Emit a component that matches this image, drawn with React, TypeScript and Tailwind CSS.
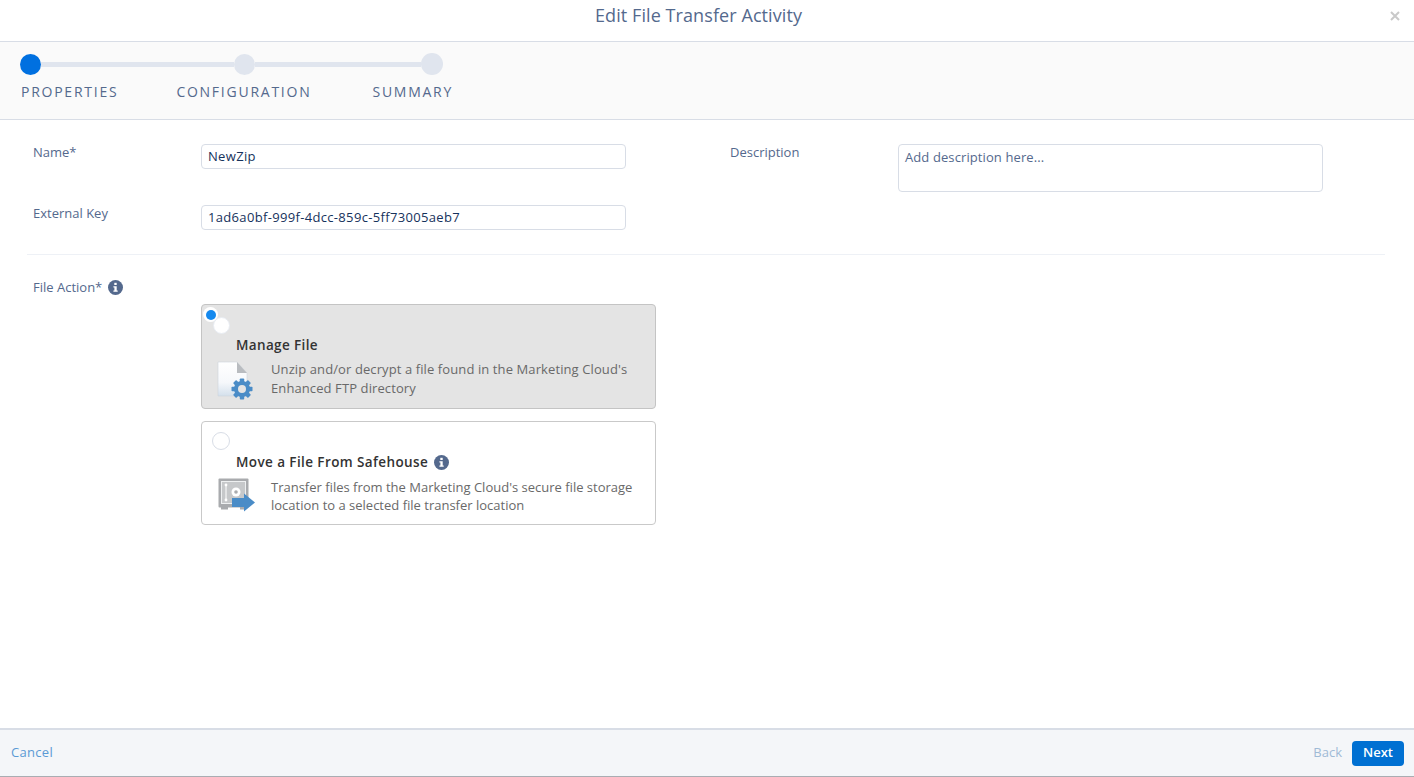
const font = "font-['Open_Sans','Noto_Sans',sans-serif]";

function InfoIcon() {
  return (
    <svg width="15" height="15" viewBox="0 0 15 15" className="shrink-0">
      <circle cx="7.5" cy="7.5" r="7.5" fill="#54698d" />
      <rect x="6.3" y="2.8" width="2.4" height="2.2" fill="#fff" />
      <path d="M5.4 6.2h3.3v4.2h1v1.3H5.4v-1.3h1V7.5h-1z" fill="#fff" />
    </svg>
  );
}

function FileGearIcon() {
  return (
    <svg width="38" height="40" viewBox="0 0 38 40">
      <defs>
        <linearGradient id="page" x1="0" y1="0" x2="0" y2="1">
          <stop offset="0" stopColor="#ffffff" />
          <stop offset="0.6" stopColor="#f6f8fb" />
          <stop offset="1" stopColor="#d4e0ec" />
        </linearGradient>
      </defs>
      <path d="M1 1h19l10 11v23H1z" fill="url(#page)" stroke="#cfd5dc" strokeWidth="0.6" />
      <path d="M20 1l10 11H20z" fill="#b9bcc0" />
      <g fill="#4a8cc7">
        <circle cx="25" cy="28" r="8" />
        <rect x="22.8" y="17.5" width="4.4" height="21" rx="0.8" />
        <rect x="14.5" y="25.8" width="21" height="4.4" rx="0.8" />
        <rect x="22.8" y="17.5" width="4.4" height="21" rx="0.8" transform="rotate(45 25 28)" />
        <rect x="22.8" y="17.5" width="4.4" height="21" rx="0.8" transform="rotate(-45 25 28)" />
      </g>
      <circle cx="25" cy="28" r="4" fill="#e4e4e4" />
    </svg>
  );
}

function SafeIcon() {
  return (
    <svg width="38" height="36" viewBox="0 0 38 36">
      <rect x="0.5" y="0.5" width="30" height="29" rx="1" fill="#a9abae" />
      <rect x="3" y="29" width="7" height="2.5" fill="#a9abae" />
      <rect x="22" y="29" width="6" height="2.5" fill="#a9abae" />
      <rect x="3.5" y="3.5" width="24" height="22" fill="#c6c8ca" stroke="#eef0f1" strokeWidth="1" />
      <path d="M8 7v15" stroke="#fff" strokeWidth="1" />
      <circle cx="8" cy="7" r="1.4" fill="#fff" />
      <circle cx="8" cy="22" r="1.4" fill="#fff" />
      <circle cx="18" cy="14" r="4.5" fill="#fff" />
      <circle cx="18" cy="14" r="1.8" fill="#a9abae" />
      <path d="M14 20h12v-4.5l11 9-11 9V29H14z" fill="#4a8cc7" />
    </svg>
  );
}

function Field({ label, value }: { label: string; value: string }) {
  return (
    <div className="flex items-start">
      <label className="w-[168px] text-[13px] leading-[16px] text-[#54698d]">{label}</label>
      <div className="flex h-[25px] w-[425px] items-center rounded-[4px] border border-[#d8dde6] px-[6px] text-[13px] tracking-[0.33px] text-[#16325c]">
        {value}
      </div>
    </div>
  );
}

export default function App() {
  return (
    <div className={`flex h-[777px] w-[1414px] flex-col overflow-hidden bg-white ${font}`}>
      <header className="flex h-[42px] shrink-0 items-center border-b border-[#d8dde6] pr-[14px] pb-[10px] pl-[7px]">
        <h1 className="flex-1 text-center text-[18px] tracking-[0.08px] text-[#54698d]">Edit File Transfer Activity</h1>
        <svg width="10" height="10" viewBox="0 0 10 10">
          <path d="M1 1l8 8M9 1l-8 8" stroke="#c9c9c9" strokeWidth="2" />
        </svg>
      </header>

      <div className="h-[78px] shrink-0 border-b border-[#d8dde6] bg-[#fafafa] pt-[11px] pl-[20px]">
        <div className="flex w-[423px] items-center">
          <span className="h-[21px] w-[21px] shrink-0 rounded-full bg-[#0070e0]" />
          <span className="h-[5px] w-[193px] bg-[#e0e5ee]" />
          <span className="h-[21px] w-[21px] shrink-0 rounded-full bg-[#e0e5ee]" />
          <span className="h-[5px] w-[166px] bg-[#e0e5ee]" />
          <span className="h-[22px] w-[22px] shrink-0 rounded-full bg-[#e0e5ee]" />
        </div>
        <div className="mt-[8px] flex pl-[1px] text-[14px] leading-[18px] tracking-[1.75px] text-[#54698d]">
          <span className="mr-[58px]">PROPERTIES</span>
          <span className="mr-[61px]">CONFIGURATION</span>
          <span>SUMMARY</span>
        </div>
      </div>

      <main className="flex-1 pt-[24px]">
        <div className="mr-[29px] ml-[27px] border-b border-[#eef1f6] pb-[24px]">
          <div className="flex pl-[6px]">
            <div className="flex w-[697px] flex-col gap-[36px]">
              <Field label="Name*" value="NewZip" />
              <Field label="External Key" value="1ad6a0bf-999f-4dcc-859c-5ff73005aeb7" />
            </div>
            <div className="flex items-start">
              <label className="w-[168px] text-[13px] leading-[16px] text-[#54698d]">Description</label>
              <div className="h-[48px] w-[425px] rounded-[4px] border border-[#d8dde6] px-[6px] pt-[3px] text-[13px] leading-[18px] tracking-[0.1px] text-[#54698d]">
                Add description here...
              </div>
            </div>
          </div>
        </div>

        <div className="flex pt-[24px] pl-[33px]">
          <div className="flex w-[168px] items-start gap-[6px] text-[13px] leading-[16px] text-[#54698d]">
            File Action*
            <span className="mt-[1px]"><InfoIcon /></span>
          </div>
          <div className="mt-[25px] flex w-[455px] flex-col gap-[12px]">
            <div className="relative h-[105px] rounded-[4px] border border-[#c4c4c4] bg-[#e4e4e4] pt-[31px] pl-[34px]">
              <span className="absolute top-[2px] left-[1px] flex h-[15px] w-[15px] items-center justify-center rounded-full bg-white">
                <span className="h-[10px] w-[10px] rounded-full bg-[#1589ee]" />
              </span>
              <span className="absolute top-[12px] left-[11px] h-[17px] w-[17px] rounded-full border border-[#e8ecf2] bg-white" />
              <div className="mb-[6px] text-[13.5px] leading-[18px] font-semibold tracking-[0.36px] text-[#333333]">Manage File</div>
              <div className="flex">
                <div className="-ml-[19px] w-[54px] shrink-0 pt-[1px]"><FileGearIcon /></div>
                <p className="text-[13px] leading-[19px] tracking-[0.1px] text-[#696969]">
                  Unzip and/or decrypt a file found in the Marketing Cloud's
                  <br />
                  Enhanced FTP directory
                </p>
              </div>
            </div>
            <div className="relative h-[104px] rounded-[4px] border border-[#c9c9c9] bg-white pt-[31px] pl-[34px]">
              <span className="absolute top-[10px] left-[10px] h-[18px] w-[18px] rounded-full border border-[#d8dde6] bg-white" />
              <div className="mb-[7px] flex items-center gap-[6px] text-[13.5px] leading-[18px] font-semibold tracking-[0.4px] text-[#333333]">
                Move a File From Safehouse
                <InfoIcon />
              </div>
              <div className="flex">
                <div className="-ml-[18px] w-[53px] shrink-0"><SafeIcon /></div>
                <p className="text-[13px] leading-[18px] text-[#696969]">
                  Transfer files from the Marketing Cloud's secure file storage
                  <br />
                  location to a selected file transfer location
                </p>
              </div>
            </div>
          </div>
        </div>
      </main>

      <footer className="flex h-[49px] shrink-0 items-center justify-between border-t-2 border-b border-t-[#d8dde6] border-b-[#a9adb3] bg-[#f4f6f9] pr-[10px] pl-[11px] text-[13px]">
        <span className="tracking-[0.3px] text-[#5b9ad5]">Cancel</span>
        <div className="flex items-center gap-[10px]">
          <span className="text-[#9fbad6]">Back</span>
          <button className="h-[25px] w-[52px] rounded-[4px] bg-[#0070d2] font-semibold text-white">Next</button>
        </div>
      </footer>
    </div>
  );
}
